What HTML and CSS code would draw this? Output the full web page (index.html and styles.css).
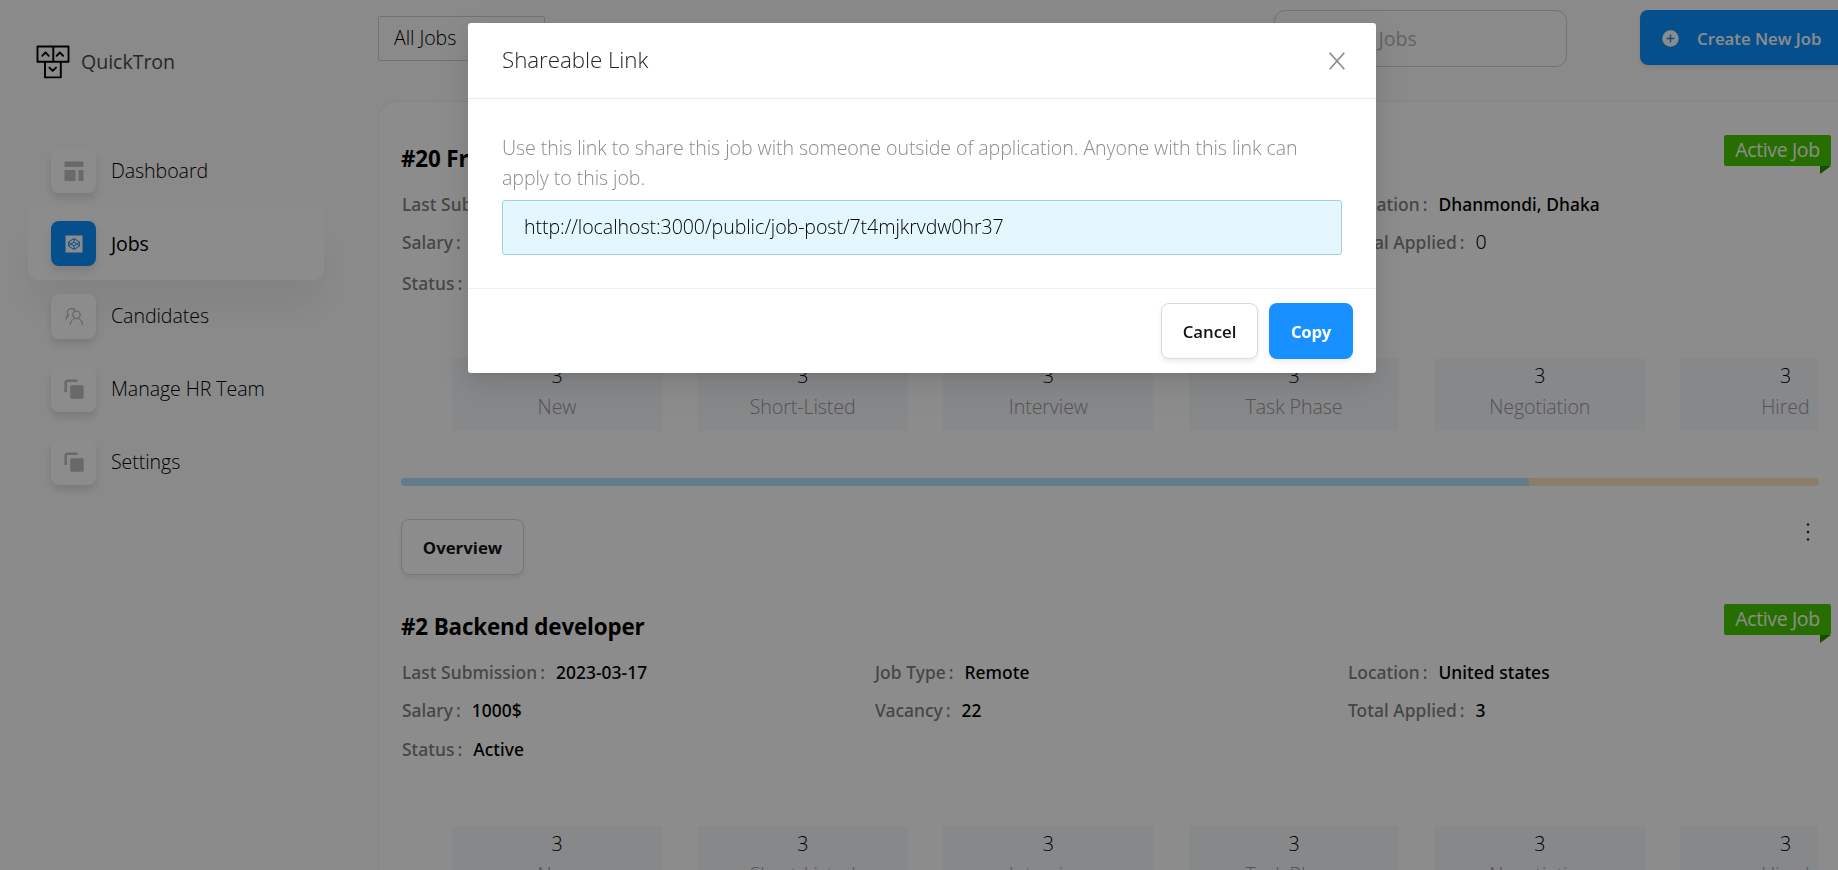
FILE: index.html
```html
<!DOCTYPE html>
<html lang="en">
<head>
<meta charset="utf-8">
<title>QuickTron</title>
<link rel="stylesheet" href="styles.css">
</head>
<body>
<div class="app">
  <aside class="sidebar">
    <div class="brand">
      <svg class="brand-icon" viewBox="0 0 34 34" fill="none" stroke="#000" stroke-width="1.9" stroke-linejoin="round" stroke-linecap="round"><path d="M1.5 1.5h15.8v15.3H1.5zM17.3 1.5h15.2v15.3H17.3zM9 16.8h15.8v15.6H9z"/><path d="M6.2 10.8l3.3-3.3 3.3 3.3M20.6 10.8l3.3-3.3 3.3 3.3M13.4 22.6l3.3 3.3 3.3-3.3"/></svg>
      <span class="brand-name">QuickTron</span>
    </div>
    <nav class="nav">
      <a class="nav-link"><span class="nav-icon"><svg viewBox="0 0 20 20" fill="#bfbfbf"><rect x=".5" y=".5" width="19" height="5.5" rx="1"/><rect x=".5" y="9" width="11" height="11" rx="1"/><rect x="14.5" y="9" width="5" height="11" rx="1"/></svg></span><span class="nav-text">Dashboard</span></a>
      <a class="nav-link active"><span class="nav-icon"><svg viewBox="0 0 20 20"><rect x="1.5" y="1.5" width="17" height="17" fill="#fff"/><path d="M10 4.5l5.6 3.6v3.8L10 15.5l-5.6-3.6V8.100zM4.400 8.100L10 11.900l5.600-3.800M4.400 11.900L10 8.100l5.600 3.800M10 4.500v3.600M10 11.900v3.600" fill="none" stroke="#1890ff" stroke-width="1"/></svg></span><span class="nav-text">Jobs</span></a>
      <a class="nav-link"><span class="nav-icon"><svg viewBox="0 0 20 20" fill="none" stroke="#b4b4b4" stroke-width="1.200" stroke-linecap="round"><path d="M4.200 9.300A4 4 0 1 1 11 4.200M1.900 13.200c.3-2 1.200-3.300 2.800-4.100"/><circle cx="12.500" cy="8.700" r="3.700"/><path d="M6.300 18.300c.4-3.300 3-5.800 6.200-5.800s5.600 2.500 6 5.800"/></svg></span><span class="nav-text">Candidates</span></a>
      <a class="nav-link"><span class="nav-icon"><svg viewBox="0 0 20 20"><path d="M13.500 1.700H3.200A1.700 1.700 0 0 0 1.700 3.200V13" fill="none" stroke="#bfbfbf" stroke-width="2.600"/><rect x="6.200" y="6.200" width="13.500" height="13.500" rx="1.500" fill="#bfbfbf"/></svg></span><span class="nav-text">Manage HR Team</span></a>
      <a class="nav-link"><span class="nav-icon"><svg viewBox="0 0 20 20"><path d="M13.500 1.700H3.200A1.700 1.700 0 0 0 1.700 3.200V13" fill="none" stroke="#bfbfbf" stroke-width="2.600"/><rect x="6.200" y="6.200" width="13.500" height="13.500" rx="1.500" fill="#bfbfbf"/></svg></span><span class="nav-text">Settings</span></a>
    </nav>
  </aside>

  <main class="main">
    <header class="toolbar">
      <div class="select">All Jobs</div>
      <div class="search">Search Jobs</div>
      <button class="btn btn-primary create"><svg viewBox="0 0 18 18"><circle cx="9" cy="9" r="8.700" fill="#fff"/><path d="M9 4.800v8.400M4.800 9h8.400" stroke="#1890ff" stroke-width="1.500"/></svg>Create New Job</button>
    </header>

    <section class="jobs">
      <article class="job first">
        <span class="ribbon">Active Job</span>
        <h2 class="job-title">#20 Frontend developer</h2>
        <dl class="facts">
          <div class="fact"><dt>Last Submission</dt><dd>2023-03-30</dd></div>
          <div class="fact"><dt>Job Type</dt><dd>Remote</dd></div>
          <div class="fact"><dt>Location</dt><dd>Dhanmondi, Dhaka</dd></div>
          <div class="fact"><dt>Salary</dt><dd>2000$</dd></div>
          <div class="fact"><dt>Vacancy</dt><dd>2</dd></div>
          <div class="fact"><dt>Total Applied</dt><dd class="zero">0</dd></div>
          <div class="fact"><dt>Status</dt><dd>Active</dd></div>
        </dl>
        <div class="stages">
          <div class="stage"><b>3</b><span>New</span></div>
          <div class="stage"><b>3</b><span>Short-Listed</span></div>
          <div class="stage"><b>3</b><span>Interview</span></div>
          <div class="stage"><b>3</b><span>Task Phase</span></div>
          <div class="stage"><b>3</b><span>Negotiation</span></div>
          <div class="stage"><b>3</b><span>Hired</span></div>
        </div>
        <div class="progress"><div class="progress-fill"></div></div>
        <div class="job-actions">
          <button class="btn btn-default overview">Overview</button>
          <svg class="more" viewBox="0 0 6 20" fill="#003a4c"><circle cx="3" cy="2.500" r="1.300"/><circle cx="3" cy="10" r="1.300"/><circle cx="3" cy="17.500" r="1.300"/></svg>
        </div>
      </article>
      <article class="job second">
        <span class="ribbon">Active Job</span>
        <h2 class="job-title">#2 Backend developer</h2>
        <dl class="facts">
          <div class="fact"><dt>Last Submission</dt><dd>2023-03-17</dd></div>
          <div class="fact"><dt>Job Type</dt><dd>Remote</dd></div>
          <div class="fact"><dt>Location</dt><dd>United states</dd></div>
          <div class="fact"><dt>Salary</dt><dd>1000$</dd></div>
          <div class="fact"><dt>Vacancy</dt><dd>22</dd></div>
          <div class="fact"><dt>Total Applied</dt><dd>3</dd></div>
          <div class="fact"><dt>Status</dt><dd>Active</dd></div>
        </dl>
        <div class="stages">
          <div class="stage"><b>3</b><span>New</span></div>
          <div class="stage"><b>3</b><span>Short-Listed</span></div>
          <div class="stage"><b>3</b><span>Interview</span></div>
          <div class="stage"><b>3</b><span>Task Phase</span></div>
          <div class="stage"><b>3</b><span>Negotiation</span></div>
          <div class="stage"><b>3</b><span>Hired</span></div>
        </div>
      </article>
    </section>
  </main>
</div>

<div class="mask">
  <div class="modal" role="dialog">
    <div class="modal-header">
      <span class="modal-title">Shareable Link</span>
      <svg class="close" viewBox="0 0 16 18" fill="none" stroke="#8c8c8c" stroke-width="1.700"><path d="M.7.700l14.600 16.600M15.300.700L.7 17.300"/></svg>
    </div>
    <div class="modal-body">
      <p class="hint">Use this link to share this job with someone outside of application. Anyone with this link can<br>apply to this job.</p>
      <div class="link-box">http://localhost:3000/public/job-post/7t4mjkrvdw0hr37</div>
    </div>
    <div class="modal-footer">
      <button class="btn btn-default cancel">Cancel</button>
      <button class="btn btn-primary copy">Copy</button>
    </div>
  </div>
</div>
</body>
</html>
```
FILE: styles.css
```css
* { box-sizing: border-box; }
body {
  margin: 0;
  height: 870px;
  overflow: hidden;
  background: #fcfcfc;
  color: #000;
  font-family: "Open Sans", "Noto Sans", sans-serif;
  font-size: 19.6px;
  font-weight: 300;
  letter-spacing: -0.075px;
  line-height: 30px;
  white-space: nowrap;
}
.app { display: flex; width: 1838px; height: 870px; overflow: hidden; }

.sidebar { flex: 0 0 378px; padding: 44px 54px 0 28px; }
.brand { display: flex; align-items: center; gap: 11px; height: 35px; padding-left: 8px; }
.brand-icon { width: 34px; height: 34px; }
.brand-name { color: #484848; font-weight: 500; letter-spacing: -0.05px; }
.nav { display: flex; flex-direction: column; margin-top: 55.5px; }
.nav-link {
  display: flex;
  align-items: center;
  gap: 15px;
  height: 72.8px;
  padding-left: 23px;
  border-radius: 11px;
}
.nav-link.active {
  background: #fff;
  box-shadow: 0 28px 38px rgba(0, 0, 0, 0.06);
  font-weight: 500;
  letter-spacing: -0.2px;
}
.nav-icon {
  display: flex;
  align-items: center;
  justify-content: center;
  width: 45px;
  height: 45px;
  border-radius: 8px;
  background: #fff;
  box-shadow: 0 5px 8px rgba(0, 0, 0, 0.12);
}
.nav-icon svg { width: 20px; height: 20px; }
.active .nav-icon { background: #0a90ff; }

.main { flex: 1; min-width: 0; }
.toolbar { display: flex; align-items: flex-start; height: 101px; padding-top: 10px; }
.select {
  flex: none;
  width: 167px;
  height: 45px;
  margin-top: 6px;
  padding: 6px 15px;
  border: 1px solid #d0d0d0;
  border-radius: 2px;
}
.search {
  flex: none;
  width: 293px;
  height: 57px;
  margin-left: 729px;
  padding: 13px 37px;
  border: 1px solid #d0d0d0;
  border-radius: 11px;
  color: #b4b4b4;
  font-weight: 500;
}
.btn {
  display: flex;
  align-items: center;
  justify-content: center;
  height: 56px;
  border-radius: 8px;
  font: 600 16.800px/30px "Open Sans", "Noto Sans", sans-serif;
  letter-spacing: 0;
  box-shadow: 0 3px 5px rgba(0, 0, 0, 0.07);
}
.btn-primary { border: 0; background: #1890ff; color: #fff; }
.btn-default { border: 1px solid #d9d9d9; background: #fff; color: #141414; }
.create {
  flex: none;
  width: 216px;
  height: 55px;
  margin-left: 73px;
  padding: 2px 0 0 22px;
  justify-content: flex-start;
  gap: 18px;
  background: #0a92ff;
}
.create svg { width: 17px; height: 17px; }

.jobs {
  position: relative;
  height: 769px;
  overflow: hidden;
  border: solid #f0f0f0;
  border-width: 1px 0 0 1px;
  border-radius: 17px 0 0 0;
  background: #fff;
  padding: 0 19px 0 22px;
}
.job { position: relative; }
.job.first { height: 490px; padding-top: 40px; }
.job.second { height: 469px; padding-top: 18px; }
.ribbon {
  position: absolute;
  top: 12px;
  right: -12px;
  width: 107px;
  height: 31px;
  border-radius: 2px;
  background: #48c800;
  color: #fff;
  font-weight: 400;
  letter-spacing: -0.4px;
  text-align: center;
}
.first .ribbon { top: 33px; }
.ribbon::after {
  content: "";
  position: absolute;
  right: 0;
  top: 31px;
  border: solid #2f8a06;
  border-width: 8px 11px 0 0;
  border-right-color: transparent;
}
.job-title { margin: 0; font-size: 22.400px; line-height: 34px; font-weight: 700; letter-spacing: -0.150px; }
.facts {
  display: grid;
  grid-template-columns: repeat(3, 473px);
  grid-template-rows: 38px 37px 41px;
  margin: 9px 0 0 1px;
}
.first .facts { grid-template-rows: 38px 38px 43px; }
.first .stages { margin-top: 54px; }
.fact { display: flex; align-items: center; gap: 11px; font-family: "Noto Sans", "Open Sans", sans-serif; font-size: 17.400px; font-weight: 500; letter-spacing: 0.050px; }
.fact dt { color: #808080; }
.fact dt::after { content: ":"; margin-left: 3px; }
.fact dd { margin: 0; }
.fact .zero { font-weight: 300; font-size: 19.600px; }
.stages { display: flex; gap: 35.700px; margin: 57px 0 0 51px; width: 1366px; overflow: hidden; }
.stage {
  flex: 0 0 210px;
  height: 73px;
  display: flex;
  flex-direction: column;
  align-items: center;
  gap: 1px;
  padding-top: 3px;
  background: #f5f7fb;
  color: #999;
}
.stage b { font-weight: 300; color: #000; }
.progress { height: 8px; margin-top: 47px; border-radius: 4px; background: #ffe2c4; overflow: hidden; }
.progress-fill { width: 1128px; height: 8px; background: #b5e2ff; }
.job-actions { display: flex; justify-content: space-between; margin-top: 33px; }
.overview { width: 123px; padding-top: 2px; font-weight: 700; }
.more { width: 6px; height: 20px; margin: 3px 8px 0 0; }

.mask { position: fixed; inset: 0; background: rgba(0, 0, 0, 0.45); }
.modal {
  width: 908px;
  height: 350px;
  margin: 23px 0 0 468px;
  border-radius: 3px;
  background: #fff;
  box-shadow: 0 4px 8px -5px rgba(0, 0, 0, 0.12), 0 8px 22px rgba(0, 0, 0, 0.08), 0 12px 38px 11px rgba(0, 0, 0, 0.05);
}
.modal-header {
  display: flex;
  align-items: center;
  justify-content: space-between;
  height: 76px;
  padding: 0 31px 0 34px;
  border-bottom: 1px solid #ebebeb;
}
.modal-title { padding-bottom: 2px; font-size: 22.400px; color: #262626; }
.close { width: 16px; height: 18px; }
.modal-body { height: 190px; padding: 34px 34px 0; border-bottom: 1px solid #f0f0f0; }
.hint { margin: 0 0 7px; color: #8c8c8c; }
.link-box { height: 55px; padding: 11px 21px; border: 1px solid #a2cfe0; border-radius: 3px; background: #e4f7ff; }
.modal-footer { display: flex; justify-content: flex-end; gap: 11px; padding: 14px 23px; }
.cancel { width: 97px; padding-top: 2px; }
.copy { width: 84px; padding-top: 2px; font-weight: 700; letter-spacing: -0.3px; }
```
